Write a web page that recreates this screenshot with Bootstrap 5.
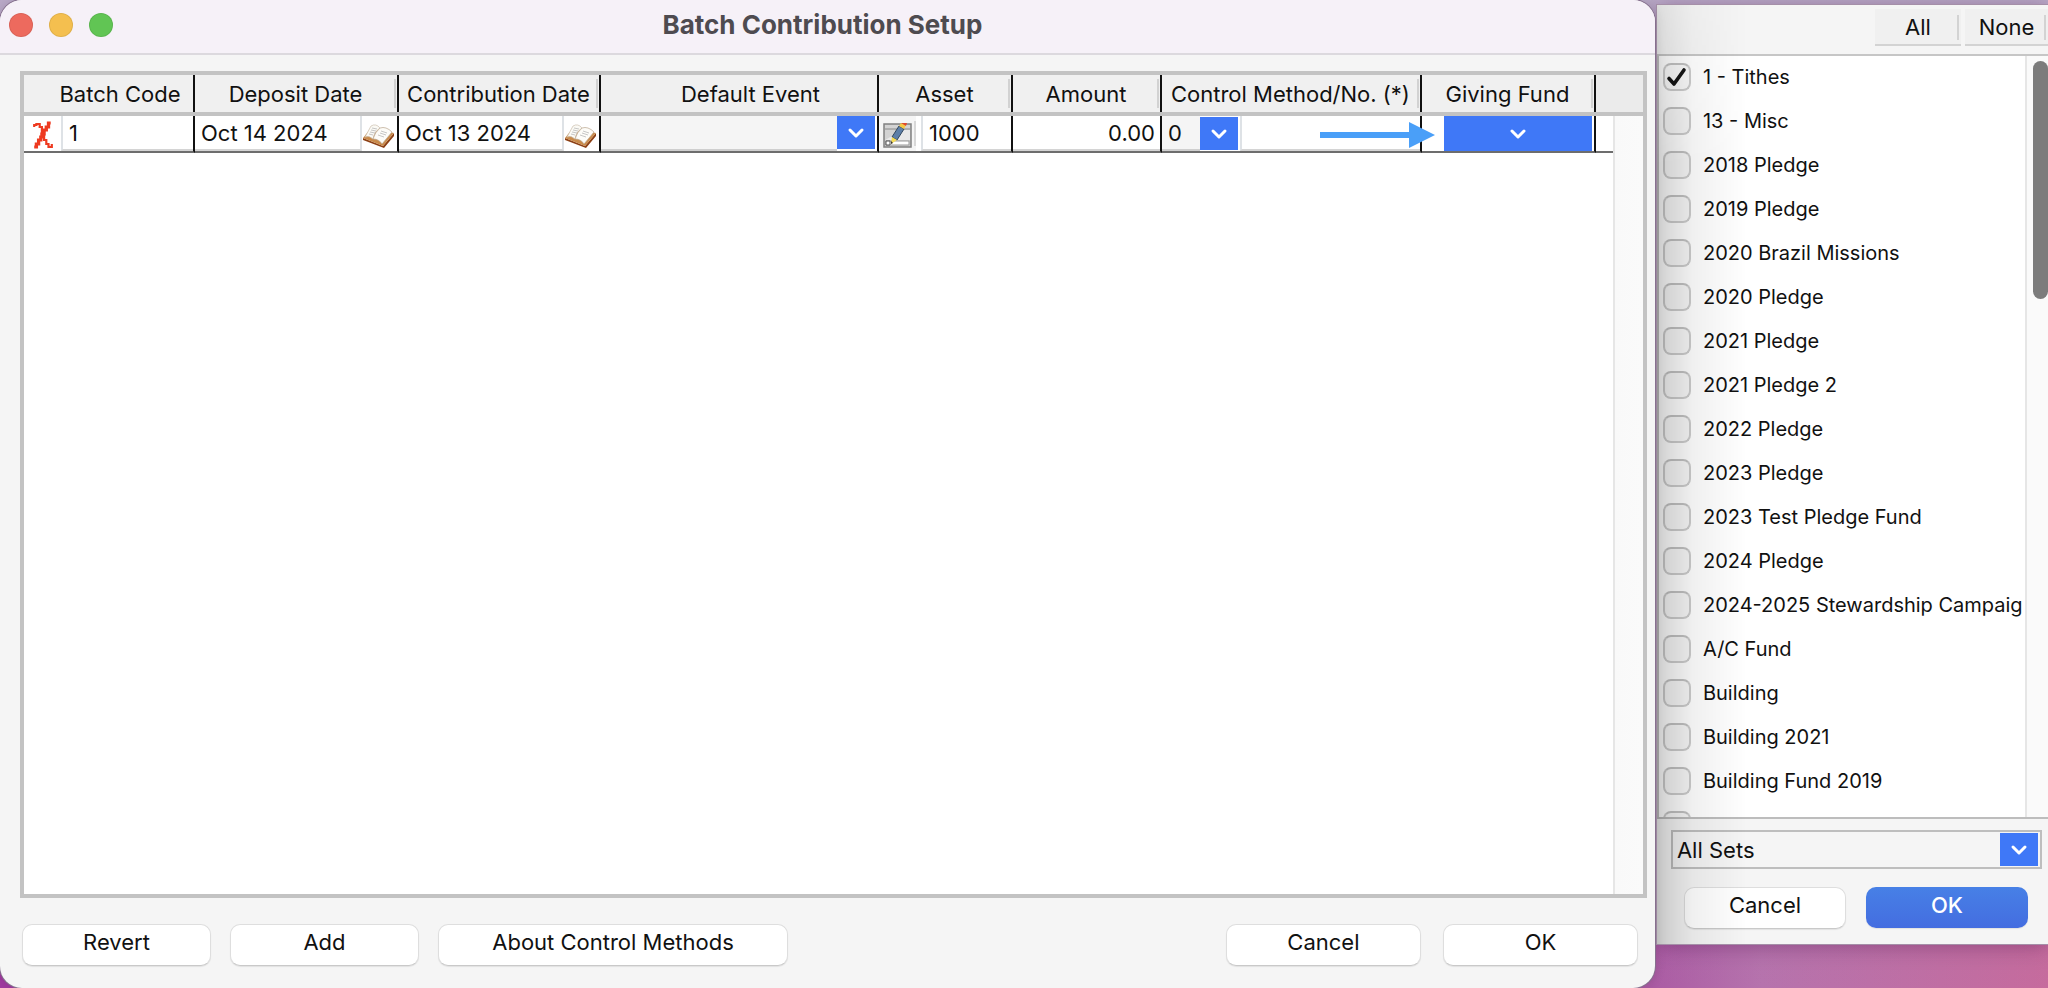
<!DOCTYPE html>
<html lang="en">
<head>
<meta charset="utf-8">
<meta name="viewport" content="width=device-width, initial-scale=1">
<title>Batch Contribution Setup</title>
<link href="https://cdn.jsdelivr.net/npm/bootstrap@5.3.0/dist/css/bootstrap.min.css" rel="stylesheet">
<style>
  :root { --blue: #3f78f7; --line: #c3c3c3; --panel: #f5f5f5; }
  body {
    font-family: Inter, "Liberation Sans", sans-serif; font-size: 22px; line-height: 28px; color: #111;
    background: linear-gradient(180deg, rgba(186,170,200,1) 0%, rgba(160,110,160,.6) 60%, rgba(160,110,160,0) 100%), linear-gradient(90deg, #a13aa0 0%, #a5509f 78%, #b673ad 86%, #c66b9d 100%);
  }
  input, select, button { font: inherit; color: inherit; }

  /* main window */
  .main-window { background: var(--panel); border-radius: 22px; z-index: 2; box-shadow: 0 0 0 1px #86708e, 0 0 12px rgba(0,0,0,.15); margin-right: 2px; }
  .title-strip { background: #f6f1f8; height: 55px; border-bottom: 2px solid #dcd9de; border-radius: 22px 22px 0 0; }
  .title-strip h1 { font-size: 26px; line-height: 50px; font-weight: 700; color: #4e4b50; padding-right: 10px; }
  .lights { position: absolute; left: 9px; top: 13px; gap: 16px; }
  .light { width: 24px; height: 24px; border-radius: 50%; border: 1px solid rgba(0,0,0,.08); }
  .grid-frame { margin: 16px 8px 26px 20px; border: 4px solid var(--line);
    background: linear-gradient(90deg, #e6e6e6 2px, #f9f9f9 2px, #fafafa) right / 30px 100% no-repeat #fff; }

  .entry { table-layout: fixed; border-collapse: separate; border-spacing: 0; width: 100%; }
  .entry th { height: 41px; padding: 0 3px 0 0; background: #f0f0f0; font-weight: 400; text-align: center; white-space: nowrap;
    border-bottom: 4px solid var(--line); position: relative; }
  .entry th:not(:last-child)::before { content: ""; position: absolute; right: 0; top: 0; bottom: 0; width: 2px; background: #111; }
  .entry th.grip::after { content: ""; position: absolute; right: 3px; top: 4px; bottom: 4px; width: 2px; background: #d2d2d2; }
  .entry th:last-child { background: #ebebeb; }
  .entry td { height: 37px; padding: 0; background: #fff; border-bottom: 2px solid #6d6d6d; border-right: 2px solid #111; position: relative; }
  .entry td.gap-end { border-right: 0; }
  .entry td.track { background: none; border: 0; }
  .cell { height: 35px; }
  .cell input, .cell select, .plain-select { border: 0; background: transparent; border-radius: 0; min-width: 0; appearance: none; outline: 0; padding: 1px 5px 0 6px; }
  .cell input { border-bottom: 2px solid #d4d4d4; }
  .cell .shade { background: var(--panel); border-bottom: 2px solid #cfcfcf; }
  .icon-btn { border: 0; background: transparent; padding: 0; width: 37px; height: 35px; flex: none; }
  .icon-btn.date { width: 35px; }
  .arrow-box { background: var(--blue); width: 38px; height: 33px; flex: none; pointer-events: none; }
  .method { width: 38px; flex: none; }
  .fund-btn { border: 0; background: var(--blue); width: 148px; height: 35px; }
  .edge { padding-right: 2px; }
  .edge-in { margin-left: 2px; }
  .asset-in { margin-left: 5px; }
  .asset-in::before { content: ""; }
  .icon-btn.ridge { background: linear-gradient(#d8d8d8, #d8d8d8) right 0 center / 2px 25px no-repeat #f5f5f5; }
  .pointer { position: absolute; left: -102px; top: 5px; z-index: 3; }

  .push { border: 1px solid #dedede; border-bottom-color: #c9c9c9; border-radius: 10px; background: #fff; height: 42px; padding: 0 0 6px; box-shadow: 0 1px 1px rgba(0,0,0,.08); }
  .w-a { width: 189px; } .w-b { width: 350px; } .w-c { width: 195px; }
  .foot { padding: 0 17px 22px 22px; }
  .foot-group { gap: 19px; }
  .foot-group.end { gap: 22px; }

  /* fund list panel */
  .fund-panel { width: 391px; margin: 5px 0 44px; background: #f5f5f5; box-shadow: 0 0 0 1px #a58fa8, 0 2px 20px rgba(60,0,60,.35); }
  .fund-panel::after { content: ""; position: absolute; left: 0; top: 0; bottom: 0; width: 90px; pointer-events: none;
    background: linear-gradient(90deg, rgba(0,0,0,.18), rgba(0,0,0,.06) 40%, rgba(0,0,0,0));
    mask-image: linear-gradient(rgba(0,0,0,.5), #000 160px); }
  .panel-head { height: 51px; border-bottom: 2px solid #c6c6c6; padding-top: 4px; gap: 4px; }
  .flat { border: 0; border-bottom: 2px solid #d3d3d3; background: #f0f0f0; height: 37px; padding: 1px 0 0; position: relative; }
  .flat::after { content: ""; position: absolute; right: 2px; top: 6px; bottom: 4px; width: 2px; background: #d3d3d3; }
  .fund-list { background: #fff; border-left: 2px solid #c3c3c3; flex: 1 1 0; min-height: 0; }
  .fund-items { padding: 7px 0 0 4px; font-size: 20px; overflow: hidden; }
  .fund-row { height: 44px; gap: 12px; white-space: nowrap; }
  .tick { appearance: none; width: 28px; height: 28px; flex: none; margin: 0; border: 2px solid #cdcdcd; border-top-color: #c2c2c2; border-radius: 8px; background: #f8f8f8; }
  .tick:checked { background: #fafafa url("data:image/svg+xml,%3Csvg xmlns='http://www.w3.org/2000/svg' viewBox='0 0 24 24'%3E%3Cpath d='M4 13.500L9 19L19 5' fill='none' stroke='%23161616' stroke-width='3.600' stroke-linecap='round' stroke-linejoin='round'/%3E%3C/svg%3E") center / 24px no-repeat; }
  .scroll-lane { width: 23px; border-left: 2px solid #e6e6e6; background: #fafafa; padding: 5px 0 0 6px; }
  .scroll-thumb { height: 238px; border-radius: 8px; background: #7c7c7c; }
  .panel-foot { border-top: 2px solid #bdbdbd; height: 127px; }
  .set-box { margin: 11px 6px 0 14px; height: 39px; border: 2px solid #bebebe; padding-right: 2px; }
  .set-box .plain-select { padding: 0 4px; }
  .panel-btns { padding: 18px 20px 0 27px; gap: 20px; }
  .push.primary { background: linear-gradient(#4780e6, #446de0); color: #fff; border: 0; height: 41px; font-weight: 500; }
</style>
</head>
<body class="overflow-hidden">
<div class="d-flex vh-100">

  <main class="main-window flex-grow-1 d-flex flex-column position-relative">
    <header class="title-strip position-relative">
      <div class="lights d-flex">
        <span class="light" style="background:#ed6a5e"></span>
        <span class="light" style="background:#f4bf4f"></span>
        <span class="light" style="background:#61c554"></span>
      </div>
      <h1 class="m-0 text-center">Batch Contribution Setup</h1>
    </header>

    <section class="grid-frame flex-grow-1">
      <table class="entry">
        <colgroup>
          <col style="width:171px"><col style="width:204px"><col style="width:202px"><col><col style="width:134px">
          <col style="width:149px"><col style="width:260px"><col style="width:174px"><col style="width:17px"><col style="width:30px">
        </colgroup>
        <thead>
          <tr>
            <th class="ps-4">Batch Code</th>
            <th class="grip">Deposit Date</th>
            <th class="grip">Contribution Date</th>
            <th class="ps-4">Default Event</th>
            <th class="grip">Asset</th>
            <th class="grip">Amount</th>
            <th class="grip">Control Method/No. (*)</th>
            <th class="grip">Giving Fund</th>
            <th colspan="2"></th>
          </tr>
        </thead>
        <tbody>
          <tr>
            <td>
              <div class="cell d-flex">
                <button class="icon-btn" aria-label="Delete row">
                  <svg width="22" height="28" viewBox="0 0 20 28" preserveAspectRatio="none" fill="none" stroke="#ee3a20" stroke-width="2"><path d="M2 6V4h2V3h3v3h2v5h1v4h1v4h2v4h2v3h3v-3"/><path d="M17 2h-2v4h-2v3h-2v4H9v3H8v3H6v4H4v3H2" stroke-width="3"/></svg>
                </button>
                <input class="flex-grow-1 border-start border-2" value="1" aria-label="Batch code">
              </div>
            </td>
            <td>
              <div class="cell d-flex">
                <input class="flex-grow-1 border-end border-2" value="Oct 14 2024" aria-label="Deposit date">
                <button class="icon-btn date text-start" aria-label="Pick deposit date"><svg width="32" height="26" viewBox="0 0 32 26"><use href="#book"/></svg></button>
              </div>
            </td>
            <td>
              <div class="cell d-flex">
                <input class="flex-grow-1 border-end border-2" value="Oct 13 2024" aria-label="Contribution date">
                <button class="icon-btn date text-start" aria-label="Pick contribution date"><svg width="32" height="26" viewBox="0 0 32 26"><use href="#book"/></svg></button>
              </div>
            </td>
            <td>
              <div class="cell d-flex edge">
                <select class="flex-grow-1 shade" aria-label="Default event"><option></option></select>
                <span class="arrow-box d-flex align-items-center justify-content-center"><svg width="18" height="12" viewBox="0 0 18 12"><use href="#chev"/></svg></span>
              </div>
            </td>
            <td>
              <div class="cell d-flex">
                <button class="icon-btn ridge" aria-label="Edit asset">
                  <svg width="29" height="25" viewBox="0 0 29 25"><rect x="1" y="1" width="27" height="23" fill="#d3d3d3" stroke="#808080" stroke-width="1.500"/><path d="M2 6h25" stroke="#8a8a8a"/><path d="M2 17L20 7h7v10z" fill="#e9e9e9"/><rect x="3" y="18" width="23" height="4" fill="#fff" stroke="#999"/><path d="M3 18h4v4H3z" fill="#fff" stroke="#555"/><path d="M9 14l7-11 5 3-7 11z" fill="#5d7fa8" stroke="#31475f"/><path d="M16 3l2-3 5 2-2 4z" fill="#f6c945"/><path d="M18 0h6l-1 3z" fill="#e04a2c"/><path d="M9 14l5 3-6 4z" fill="#f6dc55"/><path d="M8 18v3l2-1z" fill="#333"/></svg>
                </button>
                <input class="flex-grow-1 border-start border-2 asset-in" value="1000" aria-label="Asset">
              </div>
            </td>
            <td><div class="cell d-flex"><input class="flex-grow-1 text-end" value="0.00" aria-label="Amount"></div></td>
            <td>
              <div class="cell d-flex">
                <select class="shade method" aria-label="Control method"><option>0</option></select>
                <span class="arrow-box d-flex align-items-center justify-content-center align-self-center"><svg width="18" height="12" viewBox="0 0 18 12"><use href="#chev"/></svg></span>
                <input class="flex-grow-1 border-start border-2 edge-in" value="" aria-label="Control number">
              </div>
            </td>
            <td>
              <svg class="pointer" width="116" height="28" viewBox="0 0 116 28"><path d="M0 11h89V1l26 13-26 13V17H0z" fill="#4a9ff8"/></svg>
              <div class="cell d-flex justify-content-end edge">
                <button class="fund-btn d-flex align-items-center justify-content-center" aria-label="Giving fund"><svg width="18" height="12" viewBox="0 0 18 12"><use href="#chev"/></svg></button>
              </div>
            </td>
            <td class="gap-end"></td>
            <td class="track"></td>
          </tr>
        </tbody>
      </table>
    </section>

    <footer class="foot d-flex justify-content-between">
      <div class="foot-group d-flex">
        <button class="push w-a">Revert</button>
        <button class="push w-a">Add</button>
        <button class="push w-b">About Control Methods</button>
      </div>
      <div class="foot-group end d-flex">
        <button class="push w-c">Cancel</button>
        <button class="push w-c">OK</button>
      </div>
    </footer>
  </main>

  <aside class="fund-panel flex-shrink-0 d-flex flex-column position-relative">
    <div class="panel-head d-flex justify-content-end align-items-start">
      <button class="flat" style="width:86px">All</button>
      <button class="flat" style="width:83px">None</button>
    </div>
    <div class="fund-list d-flex">
      <div class="fund-items flex-grow-1" id="funds"></div>
      <div class="scroll-lane flex-shrink-0"><div class="scroll-thumb"></div></div>
    </div>
    <div class="panel-foot">
      <div class="set-box d-flex align-items-center">
        <select class="plain-select flex-grow-1" aria-label="Fund set"><option>All Sets</option></select>
        <span class="arrow-box d-flex align-items-center justify-content-center"><svg width="18" height="12" viewBox="0 0 18 12"><use href="#chev"/></svg></span>
      </div>
      <div class="panel-btns d-flex">
        <button class="push flex-fill w-50">Cancel</button>
        <button class="push primary flex-fill w-50">OK</button>
      </div>
    </div>
  </aside>
</div>

<svg width="0" height="0" class="position-absolute">
  <defs>
    <path id="chev" d="M3 3l6 6 6-6" fill="none" stroke="#fff" stroke-width="3" stroke-linecap="round" stroke-linejoin="round"/>
    <g id="book">
      <path d="M1 16l20 8 11-13v3L22 26 1 18z" fill="#8c3f14"/>
      <path d="M1 16L9 6l23 5-11 13z" fill="#c98a4a"/>
      <path d="M3 15L9 4q5-3 9 2-6 4-7 11-4-4-8-2z" fill="#fbfaf5" stroke="#cbbfae" stroke-width=".7"/>
      <path d="M11 17q2-7 7-11 6-2 12 4l-10 12q-3-5-9-5z" fill="#fdfcf8" stroke="#b9a58c" stroke-width=".7"/>
      <path d="M10 6l5 1M9 8l5 1M8 10l5 1M7 12l4 1M19 9l6 2M18 11l6 2M16 13l6 2" stroke="#b9b9b9" stroke-width=".8"/>
    </g>
  </defs>
</svg>

<script src="https://cdn.jsdelivr.net/npm/bootstrap@5.3.0/dist/js/bootstrap.bundle.min.js"></script>
<script>
  const funds = ["1 - Tithes", "13 - Misc", "2018 Pledge", "2019 Pledge", "2020 Brazil Missions", "2020 Pledge",
    "2021 Pledge", "2021 Pledge 2", "2022 Pledge", "2023 Pledge", "2023 Test Pledge Fund", "2024 Pledge",
    "2024-2025 Stewardship Campaig", "A/C Fund", "Building", "Building 2021", "Building Fund 2019", "C"];
  document.getElementById("funds").innerHTML = funds.map((name, i) =>
    `<div class="fund-row d-flex"><input class="tick" type="checkbox" id="fund${i}"${i ? "" : " checked"}><label for="fund${i}">${name}</label></div>`).join("");
</script>
</body>
</html>
